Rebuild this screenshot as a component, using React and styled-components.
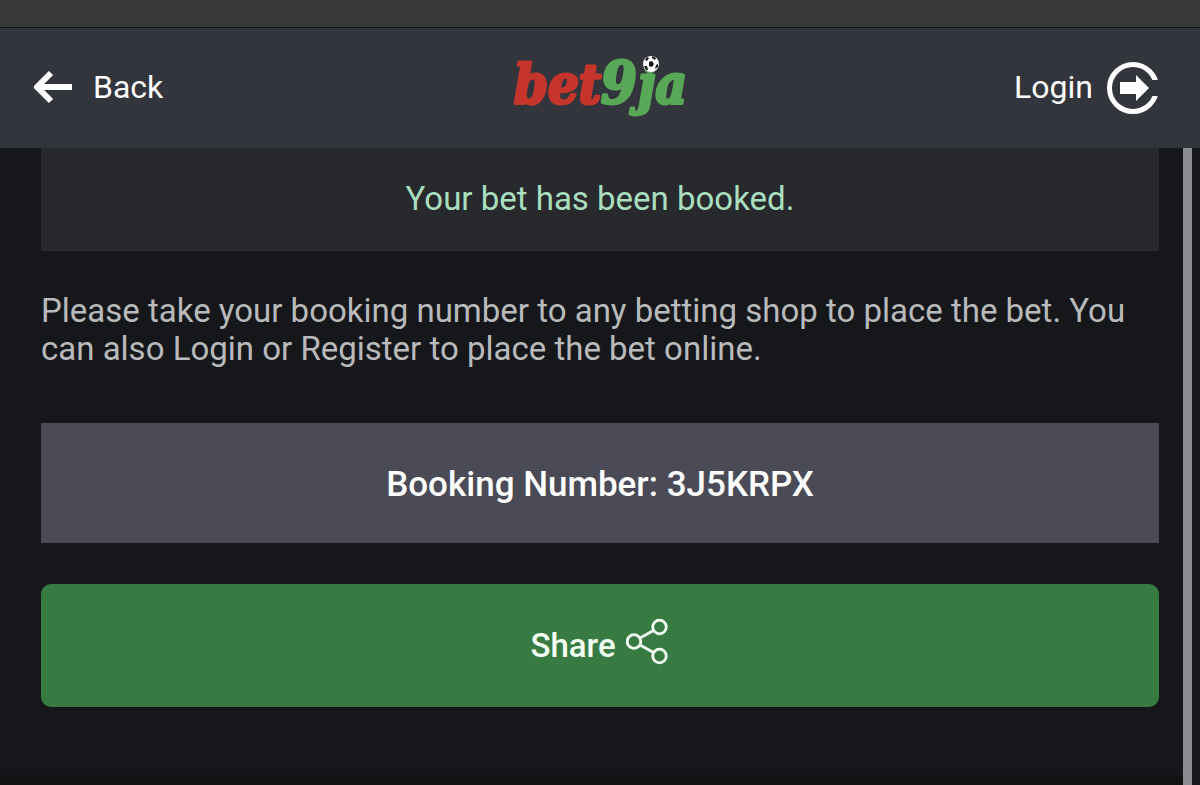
import styled, { createGlobalStyle } from "styled-components";

const GlobalStyle = createGlobalStyle`
  * {
    box-sizing: border-box;
  }

  body {
    margin: 0;
    background: #16171b;
    color: #ffffff;
    font-family: Roboto, "Liberation Sans", sans-serif;
  }
`;

const Page = styled.div`
  display: flex;
  flex-direction: column;
  min-height: 100vh;
`;

const StatusStrip = styled.div`
  height: 28px;
  background: #373838;
  border-bottom: 1px solid #121315;
`;

const Header = styled.header`
  display: grid;
  grid-template-columns: 1fr auto 1fr;
  align-items: center;
  height: 120px;
  padding: 0 40px 2px 32px;
  background: #33353d;
`;

const HeaderLink = styled.a`
  display: inline-flex;
  align-items: center;
  justify-self: ${({ $end }) => ($end ? "end" : "start")};
  gap: ${({ $end }) => ($end ? "13px" : "18px")};
  color: #ffffff;
  font-size: 32px;
  line-height: 40px;
  text-decoration: none;
`;

const HomeLink = styled.a`
  display: block;

  & svg {
    display: block;
  }
`;

const Body = styled.div`
  display: flex;
  flex: 1;
  padding-right: 8px;
`;

const Column = styled.div`
  display: flex;
  flex: 1;
  flex-direction: column;
`;

const Content = styled.main`
  flex: 1;
  padding: 0 24px 64px 41px;
`;

const ScrollThumb = styled.div`
  width: 9px;
  background: #8b8c90;
`;

const Notice = styled.p`
  margin: 0;
  padding: 31px 16px 33px;
  background: #28292d;
  color: #a9dfbf;
  font-size: 33px;
  line-height: 39px;
  text-align: center;
`;

const Hint = styled.p`
  margin: 0;
  padding: 41px 0 55px;
  color: #b9babc;
  font-size: 33px;
  line-height: 38px;
`;

const BookingNumber = styled.h1`
  margin: 0;
  padding: 42px 16px 38px;
  background: #4a4b57;
  font-size: 35px;
  font-weight: 500;
  line-height: 40px;
  text-align: center;
`;

const ShareButton = styled.button`
  display: flex;
  align-items: center;
  justify-content: center;
  gap: 10px;
  width: 100%;
  margin-top: 41px;
  padding: 32px 18px 40px 16px;
  border: 0;
  border-radius: 10px;
  background: #377b43;
  color: #f4fff4;
  font-family: inherit;
  font-size: 33px;
  font-weight: 500;
  line-height: 51px;
  cursor: pointer;

  & span {
    padding-top: 8px;
    line-height: 43px;
  }
`;

const BottomStrip = styled.div`
  height: 10px;
  background: #111214;
`;

const BackIcon = () => (
  <svg width="43" height="36" viewBox="0 0 43 36" fill="none" aria-hidden="true">
    <path
      d="M19 4 5 18l14 14M6 18h34"
      stroke="#fff"
      strokeWidth="6"
      strokeLinejoin="round"
    />
  </svg>
);

const LoginIcon = () => (
  <svg width="54" height="54" viewBox="0 0 54 54" aria-hidden="true">
    <circle cx="27" cy="28" r="23.500" fill="none" stroke="#fff" strokeWidth="5" />
    <path d="M44 20h10v16H44z" fill="#33353d" />
    <path d="M14 22h16v-7l13 13-13 13v-7H14z" fill="#fff" />
  </svg>
);

const ShareIcon = () => (
  <svg
    width="42"
    height="47"
    viewBox="0 0 42 47"
    fill="none"
    stroke="#f4fff4"
    strokeWidth="2.8"
    aria-hidden="true"
  >
    <circle cx="8" cy="23.500" r="6.800" />
    <circle cx="33.500" cy="9" r="6.800" />
    <circle cx="33.500" cy="38" r="6.800" />
    <path d="M14 20 27.500 12.500M14 27l13.500 7.500" />
  </svg>
);

const Logo = () => (
  <svg width="184" height="96" viewBox="0 0 184 96" role="img" aria-label="bet9ja">
    <g
      fontFamily="'DejaVu Serif Condensed', 'DejaVu Serif', serif"
      fontWeight="700"
      fontStyle="italic"
      strokeWidth="3"
      strokeLinejoin="round"
    >
      <text x="10" y="64" fontSize="54" fill="#c5352c" stroke="#c5352c">
        bet
      </text>
      <g fill="#58a858" stroke="#58a858">
        <text x="97" y="64" fontSize="57">
          9
        </text>
        <text x="134" y="64" fontSize="54">
          ja
        </text>
      </g>
    </g>
    <circle cx="147" cy="25" r="8" fill="#fff" />
    <path
      d="m145 23 3-1 2 3-2 3-3-1zM141 21l2-3 2 1-2 3zM148 17l4 2-1 2-3-2zM140 27l3 0 1 4-2 0zM151 30l1-4 2-1 0 3z"
      fill="#15171a"
    />
  </svg>
);

export default function App() {
  return (
    <>
      <GlobalStyle />
      <Page>
        <StatusStrip />
        <Header>
          <HeaderLink href="#back">
            <BackIcon />
            Back
          </HeaderLink>
          <HomeLink href="#home">
            <Logo />
          </HomeLink>
          <HeaderLink href="#login" $end>
            Login
            <LoginIcon />
          </HeaderLink>
        </Header>
        <Body>
          <Column>
            <Content>
              <Notice>Your bet has been booked.</Notice>
              <Hint>
                Please take your booking number to any betting shop to place
                the bet. You can also Login or Register to place the bet
                online.
              </Hint>
              <BookingNumber>Booking Number: 3J5KRPX</BookingNumber>
              <ShareButton type="button">
                <span>Share</span>
                <ShareIcon />
              </ShareButton>
            </Content>
            <BottomStrip />
          </Column>
          <ScrollThumb />
        </Body>
      </Page>
    </>
  );
}
